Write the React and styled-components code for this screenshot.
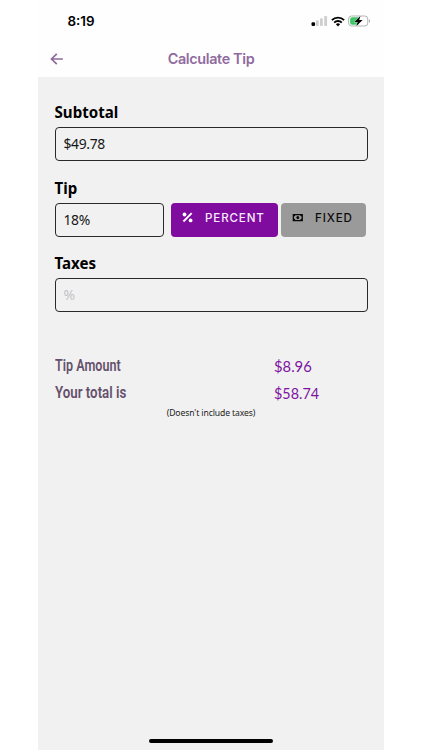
import React from "react";
import styled, { createGlobalStyle } from "styled-components";

const GlobalStyle = createGlobalStyle`
  * { box-sizing: border-box; }
  body { margin: 0; background: #fff; }
`;

const Screen = styled.main`
  width: 346px;
  height: 750px;
  margin: 0 38px;
  display: flex;
  flex-direction: column;
  background: #fefefe;
  font-family: "Noto Sans", sans-serif;
  color: #000;
`;

const StatusBar = styled.div`
  height: 41px;
  padding: 1px 13.5px 0 29.5px;
  display: flex;
  align-items: center;
  justify-content: space-between;
`;

const Clock = styled.span`
  font: 600 13.4px/20px Inter, sans-serif;
`;

const StatusIcons = styled.div`
  display: flex;
  align-items: center;
  gap: 3px;
  svg { display: block; }
`;

const Header = styled.header`
  height: 36px;
  padding: 0 12px;
  display: grid;
  grid-template-columns: 13px 1fr 13px;
  align-items: center;
`;

const BackButton = styled.button`
  padding: 0;
  border: 0;
  background: none;
  display: flex;
`;

const Title = styled.h1`
  margin: 0;
  text-align: center;
  color: #906a9e;
  font: 600 14.4px/20px Inter, sans-serif;
  letter-spacing: -0.35px;
`;

const Body = styled.section`
  flex: 1;
  padding: 25px 16.5px 0;
  display: flex;
  flex-direction: column;
  background: #f1f1f1;
`;

const Field = styled.div`
  height: 75.5px;
`;

const Label = styled.label`
  display: block;
  height: 25px;
  font-size: 15.1px;
  line-height: 21px;
  font-weight: 700;
`;

const Input = styled.input`
  display: block;
  width: ${(p) => p.$width || "100%"};
  height: 34px;
  padding: 0 8px 1px;
  border: 1px solid #29292b;
  border-radius: 4px;
  background: transparent;
  color: #161616;
  font: 400 13.9px "Noto Sans", sans-serif;
  letter-spacing: -0.35px;
  outline: none;
  &::placeholder { color: #c3c3c5; opacity: 1; }
`;

const TipRow = styled.div`
  display: flex;
`;

const ModeButton = styled.button`
  width: ${(p) => p.$width};
  height: 34px;
  margin-left: ${(p) => p.$gap};
  padding: 0 0 4px 11px;
  display: flex;
  align-items: center;
  gap: ${(p) => p.$iconGap};
  border: 0;
  border-radius: 4px;
  background: ${(p) => (p.$active ? "#7f0b9f" : "#9a9a9a")};
  color: ${(p) => (p.$active ? "#f8e9fb" : "#0c0c0c")};
  font: 500 11.6px/16px Inter, sans-serif;
  letter-spacing: 0.85px;
`;

const Summary = styled.dl`
  margin: 23px 0 1px;
  display: grid;
  grid-template-columns: 219px 1fr;
  grid-auto-rows: 27px;
  align-items: center;
`;

const SummaryLabel = styled.dt`
  justify-self: start;
  color: #65506c;
  font: 600 17.4px/27px Roboto, sans-serif;
  white-space: nowrap;
  transform: scaleX(${(p) => p.$fit});
  transform-origin: left center;
`;

const SummaryValue = styled.dd`
  margin: 0;
  justify-self: start;
  color: #7e14a0;
  font: 400 15.8px/27px Lato, sans-serif;
  transform: scaleX(${(p) => p.$fit});
  transform-origin: left center;
`;

const Note = styled.p`
  margin: 0;
  text-align: center;
  font-size: 8.6px;
  letter-spacing: -0.1px;
  line-height: 12px;
  color: #1c1c1c;
`;

const HomeIndicator = styled.div`
  width: 124px;
  height: 4px;
  margin: auto auto 7px;
  border-radius: 2px;
  background: #000;
`;

const Signal = () => (
  <svg width="17" height="12" viewBox="0 0 17 12">
    <rect x="0.5" y="7.2" width="3.6" height="3.8" rx="1.2" fill="#000" />
    <rect x="5" y="5.3" width="2.7" height="5.7" rx=".8" fill="#cfcfcf" />
    <rect x="9" y="3.2" width="2.8" height="7.8" rx=".8" fill="#cfcfcf" />
    <rect x="13.2" y="1" width="2.9" height="10" rx=".8" fill="#cfcfcf" />
  </svg>
);

const Wifi = () => (
  <svg width="14" height="11" viewBox="0 0 14 11" fill="none" stroke="#000" strokeWidth="1.9">
    <path d="M.9 4.1a8.7 8.7 0 0 1 12.2 0" />
    <path d="M3.2 6.6a5.4 5.4 0 0 1 7.6 0" />
    <path d="M7 10.5 4.9 8.3a3 3 0 0 1 4.2 0Z" fill="#000" stroke="none" />
  </svg>
);

const Battery = () => (
  <svg width="23" height="12" viewBox="0 0 23 12">
    <rect x=".6" y="1" width="19.2" height="10" rx="3" fill="#fff" stroke="#b3b3b3" />
    <path d="M4 2.3h6.5v7.4H4A1.9 1.9 0 0 1 2.1 7.8V4.2A1.9 1.9 0 0 1 4 2.3Z" fill="#3fc767" />
    <path d="M21 4.3c1.4.6 1.4 2.8 0 3.4Z" fill="#a5a5a5" />
    <path d="M12.6.8 6.4 6.9h3.3l-1.5 4.4 6.4-6.3H11.2Z" fill="#000" stroke="#fff" strokeWidth=".7" paintOrder="stroke" />
  </svg>
);

const BackArrow = () => (
  <svg width="13" height="13" viewBox="0 0 13 13" fill="none" stroke="#906a9e" strokeWidth="1.7">
    <path d="M12.9 6H1.5M6.8.8 1.5 6l5.3 5.2" />
  </svg>
);

const PercentIcon = () => (
  <svg width="11" height="11" viewBox="0 0 11 11" fill="#fff">
    <path d="M9.7 1.2 1.4 9.5" stroke="#fff" strokeWidth="1.9" />
    <circle cx="2.5" cy="2.5" r="1.9" />
    <circle cx="8.6" cy="8.4" r="1.9" />
  </svg>
);

const CashIcon = () => (
  <svg width="12" height="11" viewBox="0 0 12 11">
    <path fillRule="evenodd" d="M.7 2h10.2v7.2H.7ZM3.3 3.3c0 .7-.6 1.2-1.3 1.2v2.2c.7 0 1.3.5 1.3 1.2h5c0-.7.6-1.2 1.3-1.2V4.5c-.7 0-1.3-.5-1.3-1.2Z" fill="#080808" />
    <ellipse cx="5.8" cy="5.6" rx="1.4" ry="1.7" fill="#080808" />
  </svg>
);

export default function App() {
  return (
    <>
      <GlobalStyle />
      <Screen>
        <StatusBar>
          <Clock>8:19</Clock>
          <StatusIcons><Signal /><Wifi /><Battery /></StatusIcons>
        </StatusBar>
        <Header>
          <BackButton aria-label="Back"><BackArrow /></BackButton>
          <Title>Calculate Tip</Title>
        </Header>
        <Body>
          <Field>
            <Label htmlFor="subtotal">Subtotal</Label>
            <Input id="subtotal" defaultValue="$49.78" />
          </Field>
          <Field>
            <Label htmlFor="tip">Tip</Label>
            <TipRow>
              <Input id="tip" $width="109.5px" defaultValue="18%" />
              <ModeButton $active $width="107px" $gap="7px" $iconGap="12px"><PercentIcon />PERCENT</ModeButton>
              <ModeButton $width="84.5px" $gap="3px" $iconGap="11px"><CashIcon />FIXED</ModeButton>
            </TipRow>
          </Field>
          <Field>
            <Label htmlFor="taxes">Taxes</Label>
            <Input id="taxes" placeholder="%" />
          </Field>
          <Summary>
            <SummaryLabel $fit={0.722}>Tip Amount</SummaryLabel>
            <SummaryValue $fit={0.935}>$8.96</SummaryValue>
            <SummaryLabel $fit={0.765}>Your total is</SummaryLabel>
            <SummaryValue $fit={0.91}>$58.74</SummaryValue>
          </Summary>
          <Note>(Doesn't include taxes)</Note>
          <HomeIndicator />
        </Body>
      </Screen>
    </>
  );
}
